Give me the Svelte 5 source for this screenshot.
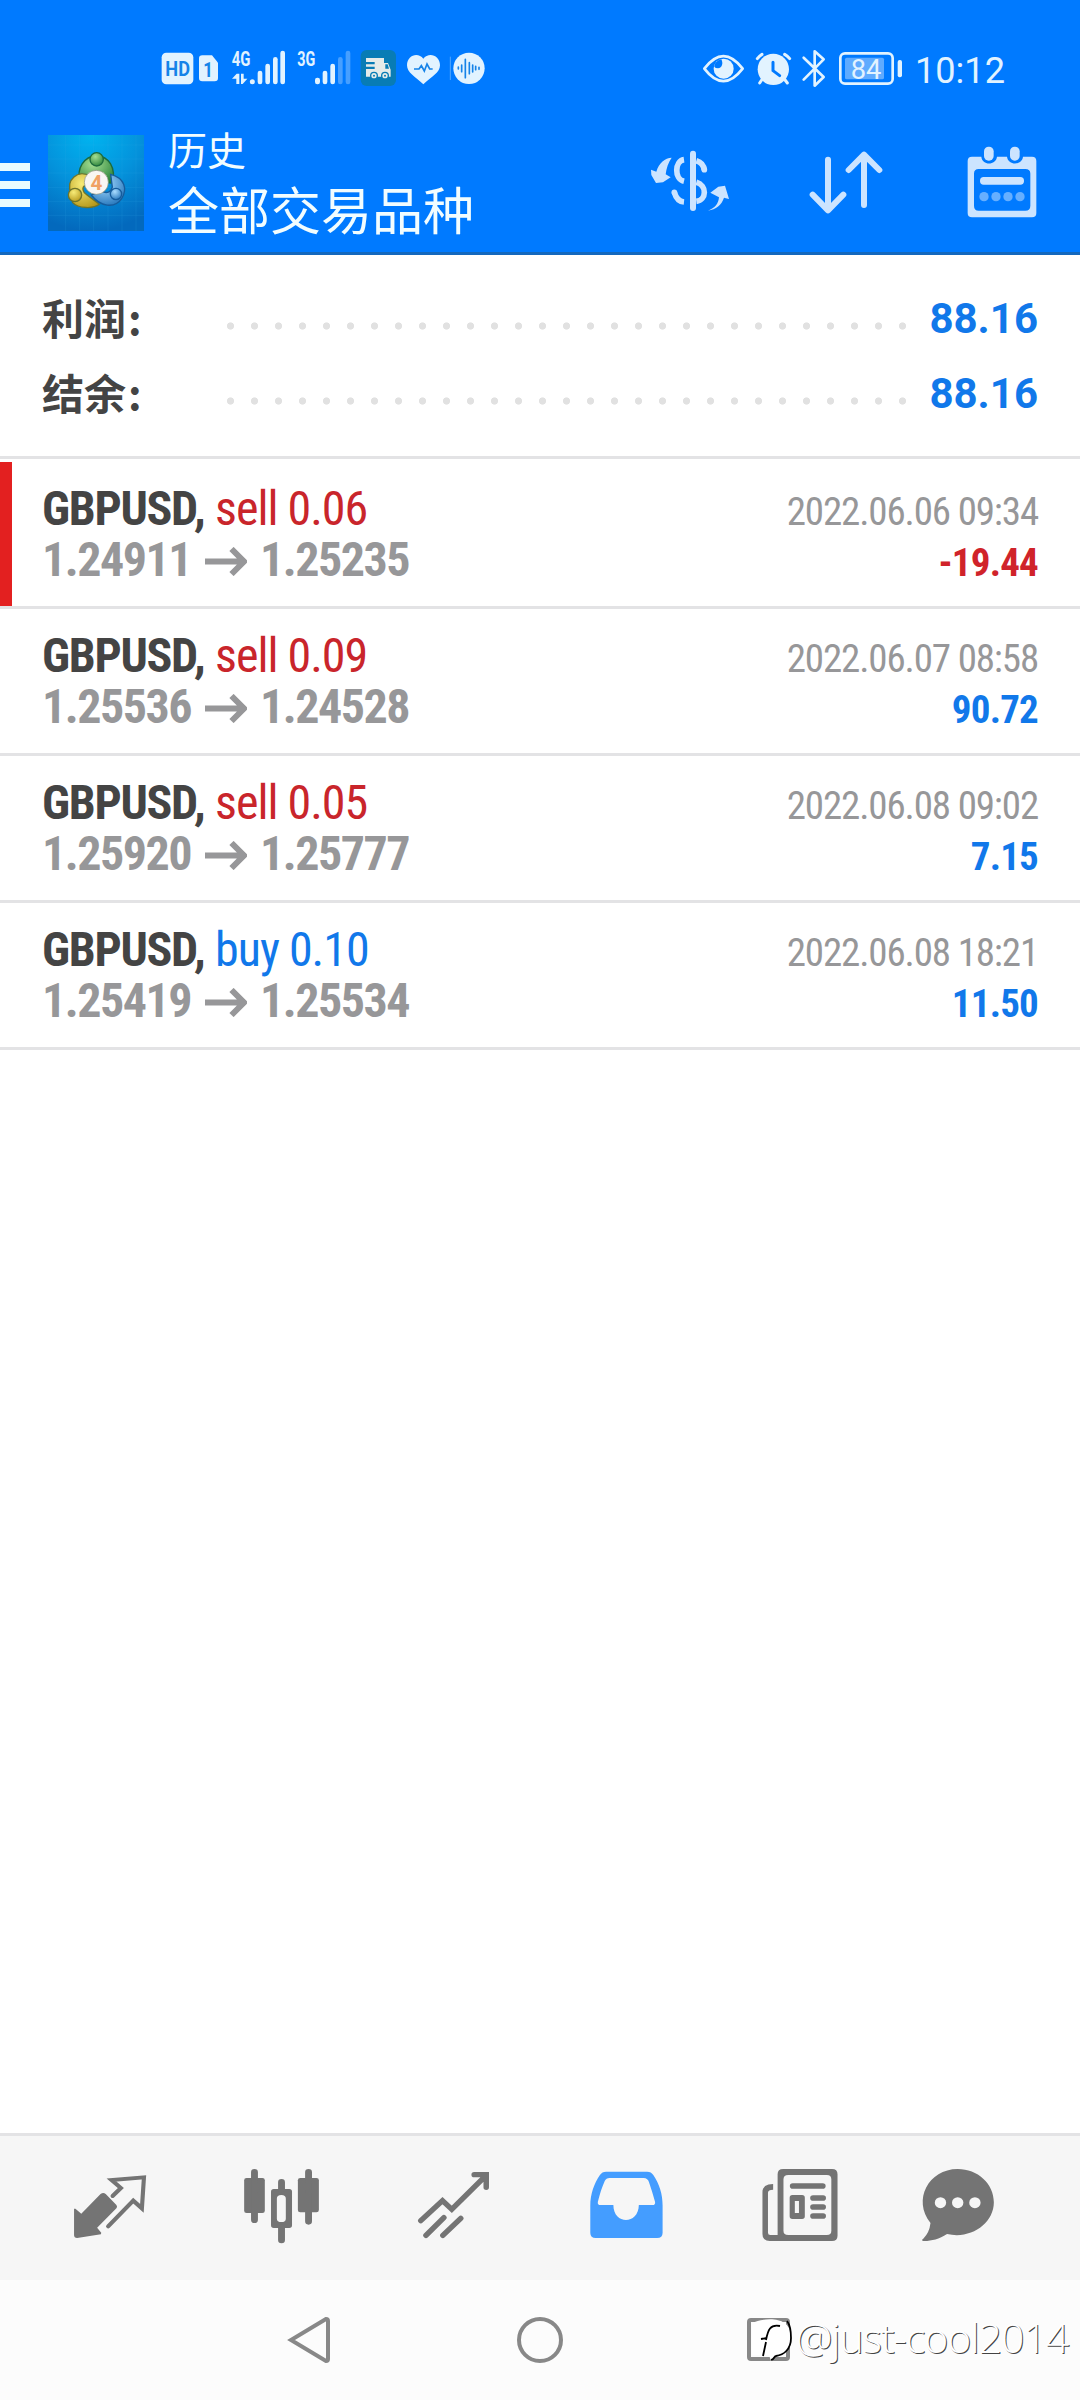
<script>
  // Account totals
  const totals = [
    { label: '利润', value: '88.16' },
    { label: '结余', value: '88.16' }
  ];

  // Closed deals
  const deals = [
    { symbol: 'GBPUSD', side: 'sell', volume: '0.06', open: '1.24911', close: '1.25235', time: '2022.06.06 09:34', profit: '-19.44', marked: true },
    { symbol: 'GBPUSD', side: 'sell', volume: '0.09', open: '1.25536', close: '1.24528', time: '2022.06.07 08:58', profit: '90.72' },
    { symbol: 'GBPUSD', side: 'sell', volume: '0.05', open: '1.25920', close: '1.25777', time: '2022.06.08 09:02', profit: '7.15' },
    { symbol: 'GBPUSD', side: 'buy', volume: '0.10', open: '1.25419', close: '1.25534', time: '2022.06.08 18:21', profit: '11.50' }
  ];
</script>

<div class="screen">
  <div class="status">
    <svg class="status-left" viewBox="0 0 1080 240" fill="#e2f3ff">
      <!-- HD -->
      <rect x="65" y="68" width="95" height="95" rx="14" />
      <text class="din" x="76" y="138" font-size="58" font-weight="700" fill="#1583e8" textLength="74" lengthAdjust="spacingAndGlyphs">HD</text>
      <!-- SIM -->
      <path d="M187 76h29l18 22v46q0 10-10 10h-37q-10 0-10-10V86q0-10 10-10z" />
      <text class="din" x="190" y="140" font-size="63" font-weight="700" fill="#1583e8" textLength="29" lengthAdjust="spacingAndGlyphs">1</text>
      <!-- 4G signal -->
      <text class="din" x="275" y="108" font-size="60" font-weight="700" textLength="56" lengthAdjust="spacingAndGlyphs">4G</text>
      <path d="M276 146l14-15h8v31h-9v-16zM303 131h8v15h11l-14 16h-5z" />
      <circle cx="337" cy="155" r="7.500" />
      <rect x="353" y="122" width="14" height="41" rx="7" />
      <rect x="376" y="101" width="14" height="62" rx="7" />
      <rect x="399" y="81" width="14" height="82" rx="7" />
      <rect x="421" y="62" width="14" height="101" rx="7" />
      <!-- 3G signal -->
      <text class="din" x="472" y="108" font-size="60" font-weight="700" textLength="54" lengthAdjust="spacingAndGlyphs">3G</text>
      <rect x="525" y="143" width="15" height="20" rx="7" />
      <rect x="548" y="122" width="14" height="41" rx="7" />
      <rect x="571" y="101" width="14" height="62" rx="7" />
      <g fill="#479fff">
        <rect x="594" y="81" width="14" height="82" rx="7" />
        <rect x="617" y="62" width="14" height="101" rx="7" />
      </g>
      <!-- delivery truck -->
      <rect x="662" y="60" width="106" height="108" rx="18" fill="#087cb5" />
      <g fill="#e5ebe9">
        <path d="M678 84h54v15h12l8 20v21H678v-23h26v-7h-26v-7h26v-7h-26z" />
        <path d="M736 103h7l4 13h-11z" fill="#087cb5" />
        <circle cx="702" cy="137" r="10" stroke="#087cb5" stroke-width="4" />
        <circle cx="735" cy="137" r="10" stroke="#087cb5" stroke-width="4" />
        <circle cx="702" cy="137" r="3" fill="#087cb5" />
        <circle cx="735" cy="137" r="3" fill="#087cb5" />
      </g>
      <!-- health -->
      <path d="M850 86c-15-21-49-12-49 20 0 22 24 34 49 57 25-23 50-35 50-57 0-32-35-41-50-20z" />
      <path d="M822 117h15l7-10 9 16 8-21 8 15h9" fill="none" stroke="#1583e8" stroke-width="5" />
      <!-- recorder -->
      <path d="M931 80v70" stroke="#79bcff" stroke-width="2" />
      <circle cx="987" cy="115" r="47" />
      <path d="M955 111v6M965 105v20M976 88v55M988 98v33M998 105v21M1007 109v10M1017 112v6" stroke="#1583e8" stroke-width="5" stroke-linecap="round" />
    </svg>
    <svg class="status-right" viewBox="0 0 1080 240" fill="#e2f3ff">
      <!-- eye comfort -->
      <path d="M73 116q57-75 115 0q-58 75-115 0z" fill="none" stroke="#e2f3ff" stroke-width="8" stroke-linejoin="round" />
      <circle cx="131" cy="116" r="30" />
      <path d="M103 104q8-14 21-16c6 11 3 26-10 27q-8 0-11-5z" fill="#007aff" />
      <!-- alarm -->
      <circle cx="280" cy="118" r="47" />
      <path d="M232 86q7-9 14-13M314 73q9 5 15 13M247 147l-8 12M313 147l9 12" fill="none" stroke="#e2f3ff" stroke-width="9" stroke-linecap="round" />
      <path d="M279 97v25l20 15" fill="none" stroke="#007aff" stroke-width="9" stroke-linecap="round" stroke-linejoin="round" />
      <!-- bluetooth -->
      <path d="M371 83l60 58-27 26V64l27 24-60 61" fill="none" stroke="#e2f3ff" stroke-width="8" stroke-linejoin="round" stroke-linecap="round" />
      <!-- battery -->
      <rect x="481" y="70" width="157" height="91" rx="14" fill="none" stroke="#e2f3ff" stroke-width="8" />
      <rect x="495" y="83" width="117" height="65" rx="5" fill="#5fabff" />
      <rect x="653" y="90" width="13" height="52" rx="6" />
      <text class="din" x="512" y="147" font-size="82" textLength="92" lengthAdjust="spacingAndGlyphs">84</text>
      <text class="din" x="705" y="160" font-size="112" font-weight="400" textLength="270" lengthAdjust="spacingAndGlyphs">10:12</text>
    </svg>
  </div>

  <header>
    <div class="menu"><i></i><i></i><i></i></div>
    <svg class="logo" viewBox="144 45 288 288">
      <defs>
        <radialGradient id="sky" cx=".45" cy="0" r="1"><stop offset="0" stop-color="#00b4f0" /><stop offset=".5" stop-color="#0493dc" /><stop offset="1" stop-color="#0369bd" /></radialGradient>
        <radialGradient id="green" cx=".4" cy=".3" r=".8"><stop offset="0" stop-color="#a5df92" /><stop offset="1" stop-color="#247e35" /></radialGradient>
        <radialGradient id="gold" cx=".4" cy=".3" r=".8"><stop offset="0" stop-color="#f7ec78" /><stop offset="1" stop-color="#b39416" /></radialGradient>
        <radialGradient id="blue" cx=".4" cy=".3" r=".8"><stop offset="0" stop-color="#a9dcff" /><stop offset="1" stop-color="#1c70b8" /></radialGradient>
      </defs>
      <rect x="144" y="45" width="288" height="288" fill="url(#sky)" />
      <path d="M197 45v288M239 45v288M281 45v288M324 45v288M366 45v288M408 45v288M144 75h288M144 117h288M144 159h288M144 202h288M144 244h288M144 286h288" stroke="#38aeea" stroke-width="1.500" opacity=".3" />
      <g stroke-width="4">
        <path d="M240 188C228 145 253 108 289 108c38 0 60 36 48 82l-27-4c3-22-6-33-21-33-14 0-22 12-20 33z" fill="url(#green)" stroke="#1d6b3c" />
        <path d="M213 220c-17-42 22-72 56-52l-12 28c-14 5-8 22 3 28l38 29c-17 14-64 13-80-5z" fill="url(#gold)" stroke="#6d742c" />
        <path d="M332 163c42 11 51 44 33 73-21 31-65 24-91-11l30-12c16 9 29 4 33-12z" fill="url(#blue)" stroke="#165c9c" />
        <circle cx="290" cy="118" r="20" fill="url(#green)" stroke="#1d6b3c" />
        <circle cx="225" cy="225" r="20" fill="url(#gold)" stroke="#6d742c" />
        <circle cx="348" cy="222" r="17" fill="url(#blue)" stroke="#165c9c" />
      </g>
      <circle cx="289" cy="187" r="36" fill="#f8f6f3" stroke="#8a8f77" stroke-width="2" />
      <text x="289" y="209" font-size="62" font-weight="700" text-anchor="middle" fill="#f0a165">4</text>
    </svg>
    <div class="titles">
      <div class="small">历史</div>
      <div class="big">全部交易品种</div>
    </div>
    <!-- symbol / sort / period -->
    <svg class="actions" viewBox="0 0 1380 396" fill="#cce4ff">
      <path d="M155 113c-20 1-38 15-46 42l-16-6 1 16 14 24 21-2 23-15-15-9c2-18 8-36 18-50zM264 272c21-9 31-19 33-40l-26-14 24-18 20-3 12 40-15-4c-7 22-24 35-48 39z" />
      <path d="M192 119c-28 4-30 58 0 65M163 217q8 27 29 29M229 122q21 6 24 28M229 187c33 9 31 53 0 57" fill="none" stroke="#cce4ff" stroke-width="17" />
      <circle cx="253" cy="149" r="8.500" /><circle cx="163" cy="217" r="8.500" />
      <path d="M219 101v163" stroke="#cce4ff" stroke-width="18" stroke-linecap="round" />
      <path d="M624 119v151M578 224l46 47 46-47M732 255V104M686 150l46-46 46 46" fill="none" stroke="#cce4ff" stroke-width="18" stroke-linecap="round" stroke-linejoin="round" />
      <path fill-rule="evenodd" d="M1056 110h28c2 27 44 27 47 0h30c3 27 45 27 48 0h27q13 0 13 13v156q0 13-13 13h-180q-13 0-13-13V123q0-13 13-13zM1076 147q-14 0-14 14v96q0 15 14 15h140q15 0 15-15v-96q0-14-15-14z" />
      <rect x="1092" y="80" width="29" height="42" rx="14" />
      <rect x="1170" y="80" width="29" height="42" rx="14" />
      <rect x="1080" y="171" width="132" height="23" rx="11" />
      <g fill="#66afff"><circle cx="1092" cy="230" r="14" /><circle cx="1128" cy="230" r="14" /><circle cx="1164" cy="230" r="14" /><circle cx="1200" cy="230" r="14" /></g>
    </svg>
  </header>

  <section class="totals">
    {#each totals as total}
      <div class="total">
        <span class="label">{total.label}<b>:</b></span>
        <span class="dots"></span>
        <span class="value">{total.value}</span>
      </div>
    {/each}
  </section>

  <main>
    {#each deals as deal}
      <div class="deal" class:marked={deal.marked}>
        <div class="left">
          <div class="line"><span class="symbol">{deal.symbol},</span><span class="side {deal.side}">{deal.side} {deal.volume}</span></div>
          <div class="line prices">
            <span class="open">{deal.open}</span>
            <svg class="arrow" viewBox="0 0 42 29"><path d="M0 14.500h38M26.500 2L39 14.500 26.500 27" fill="none" stroke="#979799" stroke-width="6" /></svg>
            <span class="close">{deal.close}</span>
          </div>
        </div>
        <div class="right">
          <div class="line time"><span>{deal.time}</span></div>
          <div class="line profit" class:loss={deal.profit.startsWith('-')}><span>{deal.profit}</span></div>
        </div>
      </div>
    {/each}
  </main>

  <nav>
    <!-- quotes -->
    <svg viewBox="174.200 48 290.400 432" preserveAspectRatio="none">
      <path d="M219 266l17 15 56-59q8-6 15 0l31 33q4 5 0 10l-56 58 12 15-1 5-69 11q-9 0-9-9v-79z" />
      <path d="M327 228l24-24-27-24 94-8-6 93-25-23-73 77" fill="none" stroke="#747474" stroke-width="12" stroke-linecap="round" />
    </svg>
    <!-- charts -->
    <svg viewBox="673.700 48 290.400 432" preserveAspectRatio="none">
      <rect x="709" y="174" width="60" height="105" rx="7" />
      <rect x="865" y="174" width="61" height="103" rx="7" />
      <path fill-rule="evenodd" d="M795 207h45q8 0 8 8v101q0 8-8 8h-45q-8 0-8-8V215q0-8 8-8zM817 225q-13 0-13 11v60q0 10 13 10t13-10v-60q0-11-13-11z" />
      <path d="M739 157v142M896 157v147M817.500 187v20M817.500 324v36" fill="none" stroke="#747474" stroke-width="20" stroke-linecap="round" />
    </svg>
    <!-- trade -->
    <svg viewBox="1173.200 48 290.400 432" preserveAspectRatio="none">
      <path d="M1222 302l63-60 27 26 96-98M1377 164h35v38M1237 346l52-53M1286 346l52-51" fill="none" stroke="#747474" stroke-width="16" stroke-linecap="round" />
    </svg>
    <!-- history -->
    <svg class="active" viewBox="104.500 48 290.400 432" preserveAspectRatio="none">
      <path fill-rule="evenodd" d="M192 155h119q12 0 18 10c18 27 27 58 27 92v81q0 16-16 16H162q-16 0-16-16v-81c0-34 11-67 28-92q6-10 18-10zM202 174q-10 0-14 9c-8 18-14 38-20 62q-2 10 8 10h37c0 60 73 60 74 0h39q10 0 8-10-8-30-17-57-4-14-16-14z" />
    </svg>
    <!-- news -->
    <svg viewBox="604 48 290.400 432" preserveAspectRatio="none">
      <path fill-rule="evenodd" d="M706 147h142q16 0 16 16v184q0 16-16 16H667q-21 0-21-21V217q0-25 31-25v17q-15 0-15 9v120q0 7 7 7h21V163q0-16 16-16zM721 165q-14 0-14 13v154q0 13 14 13h112q13 0 13-13V178q0-13-13-13z" />
      <path d="M734 198h87M793 234h29M793 261h29M793 288h29" stroke="#747474" stroke-width="17" stroke-linecap="round" />
      <path fill-rule="evenodd" d="M733 225h28q8 0 8 8v56q0 8-8 8h-28q-8 0-8-8v-56q0-8 8-8zM740 243v36h12v-36z" />
    </svg>
    <!-- mailbox -->
    <svg viewBox="1068.700 48 290.400 432" preserveAspectRatio="none">
      <path d="M1213 147c58 0 105 44 105 100 0 64-67 112-136 95-23 15-44 21-66 21-8 0-8-4-3-7q18-18 21-47c-53-69-6-162 79-162z" />
      <g fill="#f6f6f6"><circle cx="1163" cy="248" r="16.500" /><circle cx="1213" cy="248" r="16.500" /><circle cx="1263" cy="248" r="16.500" /></g>
    </svg>
  </nav>

  <footer>
    <svg class="back" viewBox="0 0 46 52"><path d="M41 5L6 26l35 21q2 0 2-2V7q0-2-2-2z" /></svg>
    <svg class="home" viewBox="0 0 46 46"><circle cx="23" cy="23" r="21" /></svg>
    <svg class="recent" viewBox="0 0 44 46"><rect x="2" y="3" width="39" height="39" rx="2" /></svg>
    <div class="watermark">
      <svg viewBox="0 0 46 46">
        <path d="M4 6C18 0 43-1 43 20c0 12-7 19-17 20l-3 4-2-6H4z" fill="#fff" />
        <path d="M39 4q4 5 4 17c0 11-7 17-15 18-2 0-1 3-5 4" fill="none" stroke="#000" stroke-width="1.800" />
        <path d="M32 9c-10-2-12 4-14 14M13 22l6-1M18 25l-3 14" fill="none" stroke="#000" stroke-width="1.800" />
      </svg>
      <span>@just-cool2014</span>
    </div>
  </footer>
</div>

<style>
  :global(body) {
    margin: 0;
    background: #fff;
  }

  .screen {
    display: flex;
    flex-direction: column;
    width: 1080px;
    height: 2400px;
    overflow: hidden;
    background: #fff;
    font-family: Roboto, "Noto Sans CJK SC", sans-serif;
  }

  svg {
    display: block;
    flex: none;
  }

  .status {
    display: flex;
    justify-content: space-between;
    height: 90px;
    padding: 30px 40px 0 140px;
    background: #007aff;
  }

  .status svg {
    width: 360px;
    height: 80px;
  }

  .din {
    font-family: Roboto, sans-serif;
  }

  header {
    display: flex;
    height: 132px;
    border-bottom: 3px solid #1468bd;
    background: #007aff;
  }

  .menu {
    display: flex;
    flex-direction: column;
    gap: 10px;
    width: 30px;
    margin: 43px 18px 0 0;
  }

  .menu i {
    height: 8px;
    background: #e8fbff;
  }

  .logo {
    width: 96px;
    height: 96px;
    margin-top: 15px;
  }

  .titles {
    width: 452px;
    padding-left: 24px;
    color: #f2fdff;
    font-family: "Noto Sans CJK SC", sans-serif;
    white-space: nowrap;
  }

  .small {
    margin-top: 5px;
    font-size: 39px;
    line-height: 46px;
  }

  .big {
    font-size: 51px;
    line-height: 74px;
  }

  .actions {
    width: 460px;
    height: 132px;
  }

  .totals {
    box-sizing: border-box;
    height: 204px;
    padding: 26px 42px 0 42px;
    border-bottom: 3px solid #e3e3e5;
  }

  .total {
    display: flex;
    align-items: center;
    height: 75px;
  }

  .label {
    width: 185px;
    margin-top: -4px;
    color: #444;
    font-family: "Noto Sans CJK SC", sans-serif;
    font-size: 42px;
    font-weight: 700;
    line-height: 75px;
  }

  .label b {
    margin-left: 2px;
    font-weight: 700;
  }

  .dots {
    width: 679px;
    height: 8px;
    margin-top: 15px;
    background: radial-gradient(circle at 3.500px 4px, #e1e1e1 3.200px, transparent 4px) 0 0 / 24px 8px repeat-x;
  }

  .value {
    margin-left: auto;
    color: #1178ea;
    font-size: 42px;
    font-weight: 700;
  }

  main {
    flex: 1;
    padding-top: 3px;
  }

  .deal {
    display: flex;
    justify-content: space-between;
    box-sizing: border-box;
    height: 147px;
    padding: 21px 42px 0 42px;
    border-bottom: 3px solid #e3e3e5;
  }

  .marked {
    box-shadow: inset 12px 0 #e32020;
  }

  .line {
    display: flex;
    align-items: baseline;
    height: 51px;
    font-family: "Roboto Condensed", Roboto, sans-serif;
    font-size: 48px;
    font-stretch: 75%;
    letter-spacing: -1px;
    line-height: 51px;
    white-space: nowrap;
  }

  .symbol {
    width: 173px;
    color: #444;
    font-weight: 700;
    letter-spacing: -1.3px;
  }

  .sell {
    color: #c9252b;
  }

  .buy {
    color: #1178ea;
  }

  .prices {
    color: #979799;
    font-weight: 700;
    letter-spacing: -1.5px;
  }

  .open {
    width: 163px;
  }

  .arrow {
    width: 42px;
    height: 29px;
    margin-right: 13px;
  }

  .right {
    padding-top: 4px;
  }

  .right .line {
    justify-content: flex-end;
    font-size: 39px;
  }

  .right .time {
    color: #979799;
    letter-spacing: -1.15px;
  }

  .right .profit {
    color: #1178ea;
    font-weight: 700;
    letter-spacing: -0.8px;
  }

  .right .loss {
    color: #d0232a;
  }

  nav {
    display: flex;
    gap: 72px;
    height: 144px;
    padding-left: 60px;
    border-top: 3px solid #e3e3e5;
    background: #f6f6f6;
  }

  nav svg {
    width: 100px;
    height: 144px;
    fill: #747474;
  }

  nav svg:last-child {
    margin-left: -12px;
  }

  nav .active {
    fill: #449dff;
  }

  footer {
    position: relative;
    display: flex;
    align-items: center;
    height: 120px;
    padding-left: 285px;
    background: #fcfcfc;
  }

  footer > svg {
    fill: none;
    stroke: #888;
    stroke-width: 4;
  }

  .back {
    width: 46px;
    height: 52px;
  }

  .home {
    width: 46px;
    height: 46px;
    margin-left: 186px;
  }

  .recent {
    width: 44px;
    height: 46px;
    margin-left: 184px;
  }

  /* user tag lies over the system buttons */
  .watermark {
    position: absolute;
    top: 37px;
    left: 748px;
    display: flex;
    align-items: center;
    height: 46px;
  }

  .watermark svg {
    width: 46px;
    height: 46px;
  }

  .watermark span {
    margin: -7px 0 0 2px;
    color: #fff;
    font-family: "Open Sans", sans-serif;
    font-size: 41px;
    font-weight: 300;
    letter-spacing: -1px;
    line-height: 46px;
    text-shadow: 1px 1px 0 #444;
    white-space: nowrap;
  }
</style>
